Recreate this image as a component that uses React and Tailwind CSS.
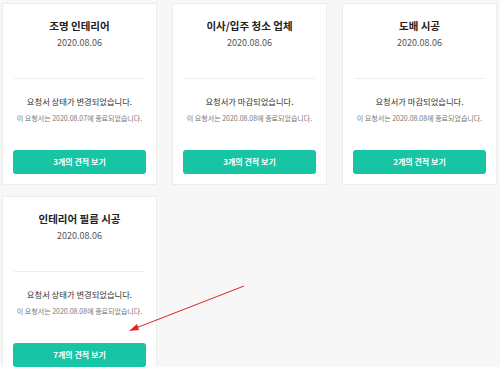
const requests = [
  { title: "조명 인테리어", date: "2020.08.06", status: "요청서 상태가 변경되었습니다.", end: "2020.08.07", count: 3 },
  { title: "이사/입주 청소 업체", date: "2020.08.06", status: "요청서가 마감되었습니다.", end: "2020.08.08", count: 3 },
  { title: "도배 시공", date: "2020.08.06", status: "요청서가 마감되었습니다.", end: "2020.08.08", count: 2 },
  { title: "인테리어 필름 시공", date: "2020.08.06", status: "요청서 상태가 변경되었습니다.", end: "2020.08.08", count: 7 },
];

function RequestCard({ item }) {
  return (
    <div className="bg-white border border-[#ececec] px-[10px] pt-[13px] pb-[10px] text-center">
      {/* 제목 / 날짜 */}
      <div className="text-[10.5px] leading-[18px] font-bold text-[#222]">{item.title}</div>
      <div className="mt-px text-[9px] leading-[14px] text-[#555]">{item.date}</div>

      <div className="mt-[28px] mx-px h-px bg-[#eeeeee]" />

      {/* 상태 */}
      <div className="mt-[15px] text-[8.3px] leading-[14px] text-[#333]">{item.status}</div>
      <div className="mt-[4px] text-[7px] leading-[12px] text-[#777] whitespace-nowrap">
        이 요청서는 {item.end}에 종료되었습니다.
      </div>

      <button className="mt-[26px] w-full h-[24px] rounded-[3px] bg-[#17c4a3] text-white text-[8px] font-bold">
        {item.count}개의 견적 보기
      </button>
    </div>
  );
}

export default function App() {
  return (
    <div
      className="relative w-full h-screen overflow-hidden bg-[#f7f7f7]"
      style={{ fontFamily: '"Noto Sans CJK KR", "Noto Sans", sans-serif' }}
    >
      <div className="grid grid-cols-[155px_155px_155px] gap-x-[15px] gap-y-[11px] pl-[2px] pt-[3px]">
        {requests.map((item) => (
          <RequestCard key={item.title} item={item} />
        ))}
      </div>

      {/* 빨간 화살표 */}
      <svg className="absolute left-0 top-0 pointer-events-none" width="500" height="367">
        <line x1="244" y1="286" x2="136" y2="328" stroke="#e02424" strokeWidth="1" />
        <polygon points="129,331 137,324 139,330" fill="#e02424" />
      </svg>
    </div>
  );
}
